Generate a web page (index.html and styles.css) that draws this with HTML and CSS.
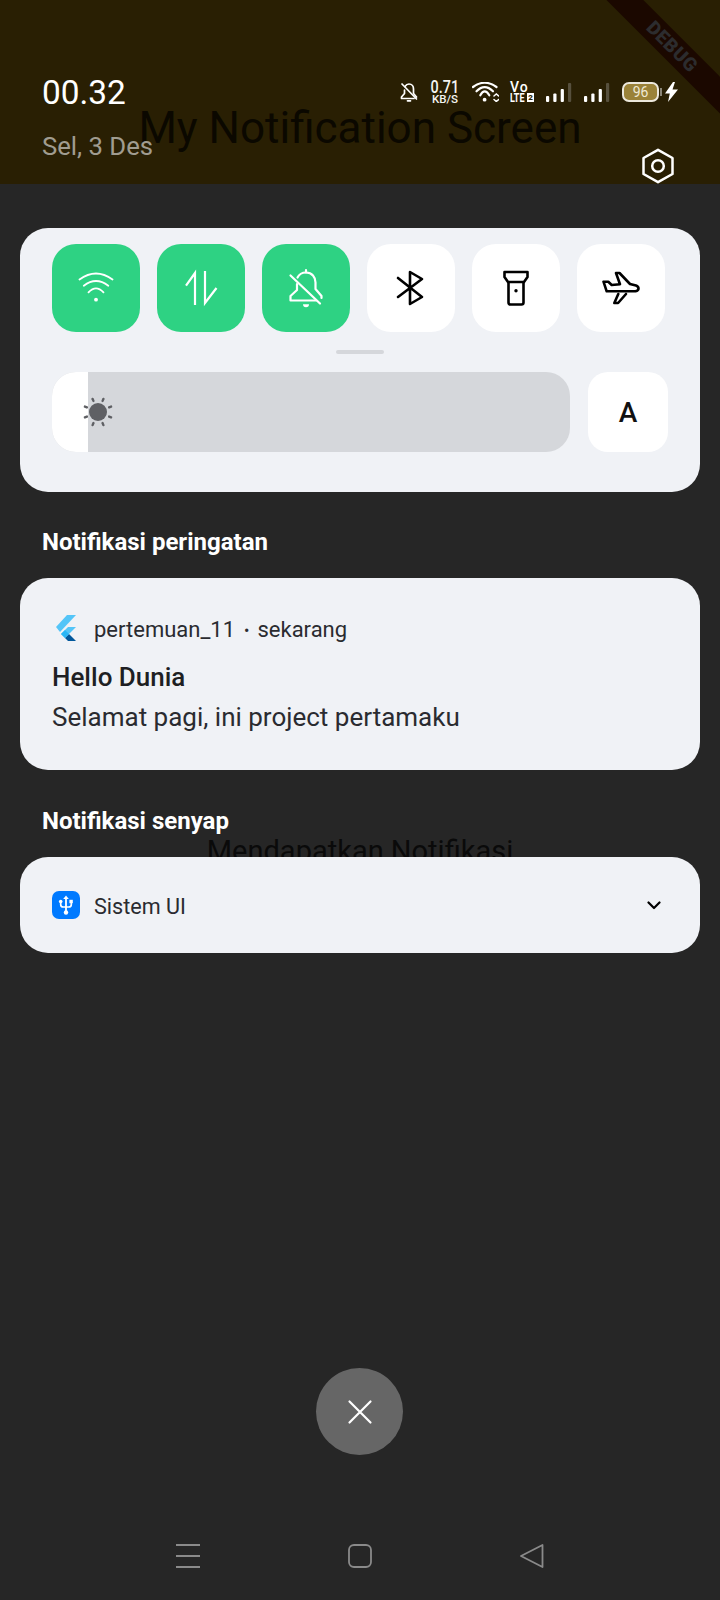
FILE: index.html
```html
<!DOCTYPE html>
<html lang="en">
<head>
  <meta charset="UTF-8" />
  <meta name="viewport" content="width=device-width, initial-scale=1.0"/>
  <title>My Notification Screen</title>
  <link rel="stylesheet" href="styles.css">
</head>
<body>
  <div class="screen">

    <header class="shade-top">
      <!-- the app underneath shows through the shade -->
      <div class="app-title">My Notification Screen</div>

      <div class="status-row">
        <span class="time">00.32</span>
        <div class="status-icons">
          <svg class="st-bell" width="18" height="20" viewBox="0 0 18 20" fill="none" stroke="#fff" stroke-width="1.700" stroke-linejoin="round" stroke-linecap="round">
            <path d="M5 4.500C6 2.800 7.300 2 9 2c3 0 4.500 2.500 4.500 5v4.500L16.500 15"/>
            <path d="M4.500 8v3.500L1.500 15v1.500H14"/>
            <path d="M2 2l14.500 15"/>
            <path d="M7.500 18.800h3"/>
          </svg>
          <div class="speed"><span class="speed-num">0.71</span><span class="speed-unit">KB/S</span></div>
          <svg class="st-wifi" width="27" height="20" viewBox="0 0 27 20" fill="none" stroke="#fff" stroke-width="2.200" stroke-linecap="round">
            <path d="M1 5Q12.600-3.500 24.500 5"/>
            <path d="M4.500 9.300Q12.600 1 21 9.300"/>
            <path d="M8.300 13.300Q12.600 5.500 17.300 13.300"/>
            <circle cx="12.600" cy="17.700" r="1.900" fill="#fff" stroke="none"/>
            <path d="M22 14l2.300-2 2.300 2M22 17.500l2.300 2 2.300-2" stroke-width="1.500"/>
          </svg>
          <div class="volte">
            <span class="volte-top">Vo</span>
            <span class="volte-low"><span class="lte">LTE</span><b class="sim">2</b></span>
          </div>
          <svg width="26" height="20" viewBox="0 0 26 20" fill="#fff">
            <rect x="0" y="14" width="3.200" height="6" rx="1"/>
            <rect x="7.300" y="11.500" width="3.200" height="8.500" rx="1"/>
            <rect x="14.700" y="7" width="3.200" height="13" rx="1"/>
            <rect x="22" y="1" width="3.200" height="19" rx="1" fill="#57503d"/>
          </svg>
          <svg width="26" height="20" viewBox="0 0 26 20" fill="#fff">
            <rect x="0" y="14" width="3.200" height="6" rx="1"/>
            <rect x="7.300" y="11.500" width="3.200" height="8.500" rx="1"/>
            <rect x="14.700" y="7" width="3.200" height="13" rx="1"/>
            <rect x="22" y="1" width="3.200" height="19" rx="1" fill="#57503d"/>
          </svg>
          <div class="battery">
            <div class="battery-body">96</div>
            <div class="battery-nub"></div>
          </div>
          <svg class="st-bolt" width="13" height="20" viewBox="0 0 13 20" fill="#fff">
            <path d="M8 0L0 11.500h4.800L3 20 13 7.500H7.500L10 0z"/>
          </svg>
        </div>
      </div>

      <div class="date-row">
        <span class="date">Sel, 3 Des</span>
        <svg class="gear" width="34" height="36" viewBox="0 0 34 36" fill="none" stroke="#fff" stroke-width="2.500" stroke-linejoin="round">
          <path d="M17 1.800L31.500 10v16L17 34.200 2.500 26V10z"/>
          <circle cx="17" cy="18" r="5.800"/>
        </svg>
      </div>

      <div class="debug-corner">
        <div class="debug-band">DEBUG</div>
      </div>
    </header>

    <main class="panel">
      <div class="app-behind">Mendapatkan Notifikasi</div>

      <section class="card quick">
        <div class="tiles">
          <div class="tile on">
            <svg width="40" height="40" viewBox="0 0 40 40" fill="none" stroke="#fff" stroke-width="1.800" stroke-linecap="round">
              <path d="M3.500 11.500Q20-.5 36.500 11.500"/>
              <path d="M7.800 17.700Q20 8.300 32.300 17.700"/>
              <path d="M12.500 24.300Q20 16.300 27.500 24.300"/>
              <circle cx="20" cy="31.700" r="1.900" fill="#fff" stroke="none"/>
            </svg>
          </div>
          <div class="tile on">
            <svg width="40" height="40" viewBox="0 0 40 40" fill="none" stroke="#fff" stroke-width="2.200">
              <path d="M14 37V5L5 17.700"/>
              <path d="M24 3v32l11.500-15"/>
            </svg>
          </div>
          <div class="tile on">
            <svg width="40" height="40" viewBox="0 0 40 40" fill="none" stroke="#fff" stroke-width="2.200" stroke-linejoin="round" stroke-linecap="round">
              <path d="M11.500 9.500C13 6.500 16 4.500 20 4.500c6 0 9.500 4.500 9.500 10V21l6 7v2"/>
              <path d="M11 16v6l-6.500 6v4.500H30"/>
              <path d="M4.500 7.500L34 35.500"/>
              <path d="M20 2v2.500"/>
              <path d="M17 36.200a3 3 0 0 0 6 0z" fill="#fff" stroke="none"/>
            </svg>
          </div>
          <div class="tile">
            <svg width="40" height="40" viewBox="0 0 40 40" fill="none" stroke="#000" stroke-width="2.600" stroke-linejoin="round" stroke-linecap="round">
              <path d="M7 10l24 19-12 7V4l12 7L7 29"/>
            </svg>
          </div>
          <div class="tile">
            <svg width="40" height="40" viewBox="0 0 40 40" fill="none" stroke="#000" stroke-width="2.600" stroke-linejoin="round">
              <path d="M8.500 4h23v5l-3.500 5H12L8.500 9z"/>
              <path d="M12.500 14v20.500q0 2 2 2h11q2 0 2-2V14"/>
              <circle cx="20" cy="22.700" r="1.700" fill="#000" stroke="none"/>
            </svg>
          </div>
          <div class="tile">
            <svg width="40" height="40" viewBox="0 0 40 40" fill="none" stroke="#000" stroke-width="2.600" stroke-linejoin="round" stroke-linecap="round">
              <path d="M15 5h3.500L29 16l6 1.500q2.500 1 2.500 3t-3 2.800H5.700L2.500 13.700h4.800L10.700 17 19 16.200z"/>
              <path d="M17.300 26L13.300 35h3.800L25 26"/>
            </svg>
          </div>
        </div>

        <div class="handle"></div>

        <div class="brightness-row">
          <div class="slider">
            <div class="slider-fill"></div>
            <svg class="sun" width="32" height="32" viewBox="0 0 32 32" fill="#5f6064" stroke="#5f6064">
              <circle cx="16" cy="16" r="9" stroke="none"/>
              <g stroke-width="2.400" stroke-linecap="round">
                <path d="M21.400 2.900l-.8 2"/>
                <path d="M10.600 29.100l.8-2"/>
                <path d="M29.100 10.600l-2 .8"/>
                <path d="M2.900 21.400l2-.8"/>
                <path d="M10.600 2.900l.8 2"/>
                <path d="M21.400 29.100l-.8-2"/>
                <path d="M29.100 21.400l-2-.8"/>
                <path d="M2.900 10.600l2 .8"/>
              </g>
            </svg>
          </div>
          <div class="auto-btn">A</div>
        </div>
      </section>

      <h2 class="group-title first">Notifikasi peringatan</h2>

      <section class="card notif">
        <div class="notif-head">
          <svg class="flutter" width="20" height="26" viewBox="0 0 20 26">
            <polygon points="20,0 11,0 0,12 4,17" fill="#54c5f8"/>
            <polygon points="20,12 12,12 5,19 9,23" fill="#54c5f8"/>
            <polygon points="9,23 12,26 20,26 13,19" fill="#01579b"/>
            <polygon points="5,19 9,15 13,19 9,23" fill="#29b6f6"/>
          </svg>
          <span class="head-text">pertemuan_11</span>
          <span class="dot">•</span>
          <span class="head-text">sekarang</span>
        </div>
        <div class="notif-title">Hello Dunia</div>
        <div class="notif-body">Selamat pagi, ini project pertamaku</div>
      </section>

      <h2 class="group-title">Notifikasi senyap</h2>

      <section class="card silent">
        <div class="usb">
          <svg width="16" height="20" viewBox="0 0 16 20" fill="#fff" stroke="#fff">
            <path d="M8 3v14" stroke-width="1.800"/>
            <path d="M8 0.500l2.800 3.500H5.200z" stroke="none"/>
            <path d="M2.700 7v2.500q0 2.500 2.500 2.500h5.600q2.500 0 2.500-2.500V7" fill="none" stroke-width="1.700"/>
            <circle cx="2.700" cy="6.500" r="1.800" stroke="none"/>
            <rect x="11.400" y="4.800" width="3.400" height="3.400" stroke="none"/>
            <circle cx="8" cy="17.500" r="2.200" stroke="none"/>
          </svg>
        </div>
        <span class="silent-name">Sistem UI</span>
        <svg class="chevron" width="14" height="9" viewBox="0 0 14 9" fill="none" stroke="#000" stroke-width="2.200" stroke-linecap="round" stroke-linejoin="round">
          <path d="M1.500 1.500L7 7l5.500-5.500"/>
        </svg>
      </section>

      <div class="close-btn">
        <svg width="26" height="26" viewBox="0 0 26 26" fill="none" stroke="#fff" stroke-width="2.200" stroke-linecap="round">
          <path d="M2.500 2.500l21 21M23.500 2.500l-21 21"/>
        </svg>
      </div>

      <nav class="nav-bar">
        <svg width="24" height="24" viewBox="0 0 24 24" stroke="#8a8a8a" stroke-width="1.800">
          <path d="M0 1h24M0 12h24M0 23h24"/>
        </svg>
        <svg width="24" height="24" viewBox="0 0 24 24" fill="none" stroke="#8a8a8a" stroke-width="1.800">
          <rect x="1" y="1" width="22" height="22" rx="5"/>
        </svg>
        <svg width="24" height="24" viewBox="0 0 24 24" fill="none" stroke="#8a8a8a" stroke-width="1.800" stroke-linejoin="round">
          <path d="M1 12L22.500 1v22z"/>
        </svg>
      </nav>
    </main>

  </div>
</body>
</html>
```

FILE: styles.css
```css
* {
  box-sizing: border-box;
}

body {
  margin: 0;
  background: #262626;
  font-family: 'Roboto', sans-serif;
}

.screen {
  width: 720px;
  height: 1600px;
  display: flex;
  flex-direction: column;
  overflow: hidden;
}

.shade-top {
  position: relative;
  height: 184px;
  flex-shrink: 0;
  padding: 72px 42px 0;
  background: #291f03;
  overflow: hidden;
}

.app-title {
  position: absolute;
  left: 0;
  right: 0;
  top: 102px;
  text-align: center;
  font-size: 44px;
  line-height: 53px;
  color: #0b0800;
}

.status-row {
  position: relative;
  display: flex;
  justify-content: space-between;
  align-items: center;
  height: 40px;
}

.time {
  color: #fff;
  font-size: 33.400px;
}

.status-icons {
  display: flex;
  align-items: center;
  gap: 12px;
  height: 20px;
}

.st-bell {
  margin-right: 1px;
}

.speed {
  display: flex;
  flex-direction: column;
  align-items: center;
  width: 28px;
  color: #f4f4f0;
  margin-right: 1px;
}

.speed-num {
  font-size: 18px;
  line-height: 14px;
  font-weight: 500;
  transform: scaleX(0.8);
}

.speed-unit {
  font-size: 11.500px;
  line-height: 10px;
  font-weight: 500;
}

.st-wifi {
  margin-right: -1px;
}

.volte {
  display: flex;
  flex-direction: column;
  width: 24px;
  color: #fff;
  font-weight: 500;
}

.volte-top {
  font-size: 14px;
  line-height: 11px;
  letter-spacing: 1px;
}

.volte-low {
  display: flex;
  align-items: center;
  font-size: 12px;
  line-height: 10px;
  font-weight: 700;
}

.lte {
  width: 17px;
  transform: scaleX(0.75);
  transform-origin: left center;
}

.sim {
  width: 8px;
  height: 9px;
  background: #fff;
  color: #291f03;
  font-size: 8px;
  line-height: 9px;
  text-align: center;
}

.battery {
  display: flex;
  align-items: center;
  gap: 1px;
}

.battery-body {
  width: 37px;
  height: 20px;
  border: 2px solid #ece8dc;
  border-radius: 7px;
  background: #9a8238;
  color: #efe9d4;
  font-size: 14px;
  line-height: 16px;
  text-align: center;
}

.battery-nub {
  width: 2px;
  height: 8px;
  background: #8a8576;
}

.st-bolt {
  margin-left: -9px;
}

.date-row {
  position: relative;
  display: flex;
  justify-content: space-between;
  align-items: flex-start;
  margin-top: 19px;
}

.date {
  color: #a09c90;
  font-size: 25.700px;
  line-height: 30px;
}

.gear {
  margin: 17px 3px 0 0;
}

.debug-corner {
  position: absolute;
  top: 0;
  right: 0;
  width: 120px;
  height: 120px;
  overflow: hidden;
}

.debug-band {
  position: absolute;
  left: -28px;
  top: 34px;
  width: 200px;
  height: 25.500px;
  background: #1b0800;
  color: #2c2c2e;
  font-size: 19px;
  line-height: 25.500px;
  font-weight: 900;
  text-align: center;
  letter-spacing: 0.500px;
  transform: rotate(45deg);
}

.panel {
  position: relative;
  flex: 1;
  display: flex;
  flex-direction: column;
  padding: 44px 20px 32px;
  background: #262626;
}

.app-behind {
  position: absolute;
  left: 0;
  right: 0;
  top: 650px;
  text-align: center;
  font-size: 29px;
  line-height: 34px;
  color: #0a0a0a;
}

.card {
  position: relative;
  background: #f0f2f6;
  border-radius: 28px;
}

.quick {
  height: 264px;
  padding: 16px 32px 0;
}

.tiles {
  display: flex;
  gap: 17px;
}

.tile {
  width: 88px;
  height: 88px;
  border-radius: 24px;
  background: #fff;
  display: flex;
  align-items: center;
  justify-content: center;
}

.tile.on {
  background: #2ed283;
}

.handle {
  width: 48px;
  height: 4px;
  margin: 18px auto;
  border-radius: 2px;
  background: #d5d7db;
}

.brightness-row {
  display: flex;
  gap: 18px;
}

.slider {
  position: relative;
  width: 518px;
  height: 80px;
  border-radius: 24px;
  background: #d5d7db;
  overflow: hidden;
}

.slider-fill {
  width: 36px;
  height: 100%;
  background: #fff;
}

.sun {
  position: absolute;
  left: 30px;
  top: 24px;
}

.auto-btn {
  width: 80px;
  height: 80px;
  border-radius: 20px;
  background: #fff;
  color: #111;
  font-size: 28px;
  font-weight: 500;
  display: flex;
  align-items: center;
  justify-content: center;
}

.group-title {
  position: relative;
  margin: 0;
  padding: 38px 22px 23px;
  color: #fff;
  font-size: 24px;
  line-height: 26px;
  font-weight: 700;
}

.group-title.first {
  padding: 37px 22px 23px;
}

.notif {
  height: 192px;
  padding: 37px 32px 0;
  color: #2a2b30;
}

.notif-head {
  display: flex;
  align-items: center;
  height: 26px;
  font-size: 22px;
}

.head-text {
  position: relative;
  top: 1px;
}

.flutter {
  margin: 0 18px 0 4px;
}

.dot {
  position: relative;
  top: 2px;
  margin: 0 8px 0 9px;
  font-size: 16px;
}

.notif-title {
  margin-top: 21px;
  color: #1e1f23;
  font-size: 26px;
  line-height: 30px;
  font-weight: 500;
}

.notif-body {
  margin-top: 10px;
  font-size: 26px;
  line-height: 30px;
}

.silent {
  display: flex;
  align-items: center;
  height: 96px;
  padding: 0 39px 0 32px;
  color: #2a2b30;
}

.usb {
  width: 28px;
  height: 28px;
  border-radius: 7px;
  background: #007aff;
  display: flex;
  align-items: center;
  justify-content: center;
}

.silent-name {
  flex: 1;
  margin: 2px 0 0 14px;
  font-size: 21.600px;
}

.close-btn {
  width: 87px;
  height: 87px;
  margin: auto 0 89px 296px;
  border-radius: 50%;
  background: #666666;
  display: flex;
  align-items: center;
  justify-content: center;
}

.nav-bar {
  display: flex;
  justify-content: center;
  gap: 148px;
  height: 24px;
}
```
